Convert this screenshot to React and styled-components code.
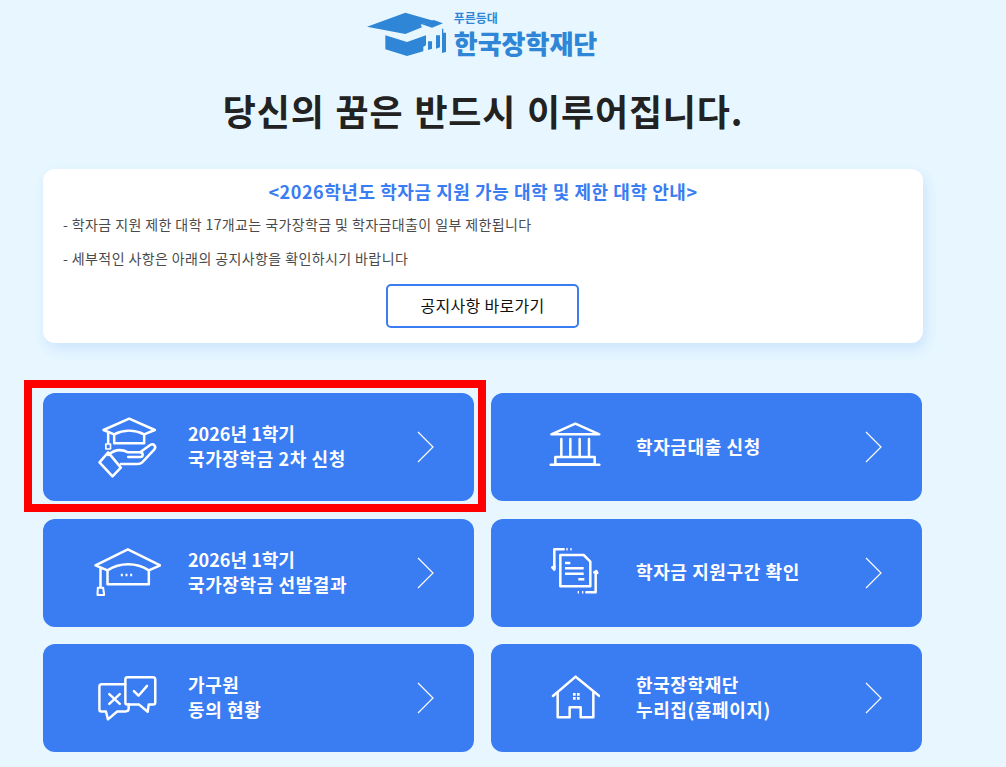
import React from 'react';
import styled, { createGlobalStyle } from 'styled-components';

const Global = createGlobalStyle`
  html, body { margin: 0; padding: 0; height: 100%; overflow: hidden; }
  body {
    background: #e8f7ff;
    font-family: "Noto Sans CJK KR", "Noto Sans", sans-serif;
  }
`;

const Page = styled.div`
  width: 966px;
  box-sizing: border-box;
  padding: 0 43px;
`;

const LogoRow = styled.div`
  display: flex;
  justify-content: center;
  align-items: flex-start;
  gap: 6px;
  height: 60px;
  padding: 11px 2px 0 0;
  box-sizing: border-box;
`;

const LogoText = styled.div`
  display: flex;
  flex-direction: column;
  color: #2f86d6;
  font-weight: 700;
`;

const LogoSmall = styled.span`
  font-size: 12px;
  line-height: 14px;
`;

const LogoBig = styled.span`
  font-size: 26px;
  line-height: 30px;
  margin-top: 3px;
  font-weight: 900;
`;

const Headline = styled.h1`
  margin: 0;
  height: 109px;
  padding-top: 24px;
  box-sizing: border-box;
  text-align: center;
  font-size: 36px;
  line-height: 52px;
  font-weight: 700;
  letter-spacing: 0.8px;
  word-spacing: 2px;
  color: #222;
`;

const Notice = styled.section`
  height: 174px;
  box-sizing: border-box;
  padding: 8px 20px 0;
  background: #fff;
  border-radius: 12px;
  box-shadow: 3px 6px 14px rgba(60, 130, 240, 0.16);
`;

const NoticeTitle = styled.div`
  text-align: center;
  font-size: 18px;
  line-height: 28px;
  font-weight: 700;
  letter-spacing: 0.55px;
  color: #3a7cf2;
`;

const NoticeLine = styled.p`
  margin: ${p => p.$top}px 0 0;
  font-size: 14px;
  line-height: 20px;
  letter-spacing: 0.4px;
  color: #4a4a4a;
`;

const NoticeLink = styled.a`
  display: block;
  width: 193px;
  height: 44px;
  box-sizing: border-box;
  margin: 16px 0 0 323px;
  border: 2px solid #3a7cf2;
  border-radius: 5px;
  text-align: center;
  font-size: 16px;
  line-height: 39px;
  letter-spacing: 0.3px;
  color: #111;
`;

const Grid = styled.div`
  display: grid;
  grid-template-columns: 431px 431px;
  grid-auto-rows: 108px;
  column-gap: 17px;
  row-gap: 17.5px;
  margin-top: 50px;
`;

const Tile = styled.a`
  position: relative;
  display: flex;
  align-items: center;
  padding: 0 40px 0 24px;
  background: #3a7cf2;
  border-radius: 12px;
  color: #fff;
`;

const IconSlot = styled.div`
  flex: 0 0 121px;
  display: flex;
  justify-content: center;
  padding-right: 1px;
  box-sizing: border-box;
`;

const TileText = styled.div`
  flex: 1;
  padding-bottom: 2px;
  font-size: 18px;
  line-height: 25px;
  font-weight: 700;
`;

const TileLine = styled.div`
  letter-spacing: ${p => (p.$numeric ? '0' : '0.6px')};
`;

const Highlight = styled.div`
  position: absolute;
  left: -19px;
  top: -13px;
  width: 462px;
  height: 132px;
  box-sizing: border-box;
  border: 8px solid #ff0000;
  pointer-events: none;
`;

const Line = styled.svg`
  display: block;
  fill: none;
  stroke: #fff;
  stroke-width: 7.5;
  stroke-linecap: round;
  stroke-linejoin: round;
`;

const Chevron = () => (
  <svg width="17" height="32" viewBox="0 0 17 32" fill="none" stroke="#fff" strokeWidth="1.2">
    <path d="M1 1l15 15L1 31" />
  </svg>
);

const CapLogo = () => (
  <svg width="81" height="48" viewBox="85 35 243 144" fill="#2f86d6">
    <path d="M85 82l115-42 84 24-38 12 4 8-50 20z" />
    <path d="M250 75l35-13 28 10-33 13z" />
    <path d="M140 108l65 20 57-20v30l-8 4v14l-49 14-65-20z" />
    <path d="M268 126h12v22l-12 4zM292 108h12v36l-12 4zM310 88h4v12h8v58l-12 3z" />
  </svg>
);

const CapHandIcon = () => (
  <Line width="67" height="65" viewBox="220 120 200 195">
    <path d="M248 165l77-34 77 34-32 13c-28-14-62-14-90 0z" />
    <path d="M280 178v27h90v-27" />
    <path d="M262 172v32" />
    <path d="M255 207h14v15h-14z" strokeWidth="5" />
    <path d="M236 262l26-30 38 46-25 26z" />
    <path d="M262 240c20-18 40-18 60-8h36c10 0 10 14 0 14h-36" />
    <path d="M358 232l30-22c10-6 20 4 12 14l-36 38c-4 4-8 5-14 5h-50" />
  </Line>
);

const CapIcon = () => (
  <Line width="67" height="50" viewBox="40 55 200 150">
    <path d="M44 107l97-48 97 48-34 15c-38-24-86-24-124 0z" />
    <path d="M80 122v42h124v-42" />
    <path d="M59 114v58" />
    <path d="M51 174h16l3 22H50z" strokeWidth="6" />
    <path d="M120 136h6M134 136h6M148 136h6" strokeLinecap="butt" />
  </Line>
);

const ChatIcon = () => (
  <Line width="60" height="46" viewBox="50 45 180 140">
    <path d="M135 73H63c-5 0-7 2-7 7v70c0 4 2 6 6 6h14l6 24 28-24h25c6 0 10-3 10-8v-14" />
    <path d="M141 52h78c5 0 7 2 7 7v70c0 4-2 6-6 6h-14l-3 22-26-22h-36c-4 0-6-2-6-6V59c0-5 2-7 6-7z" />
    <path d="M86 103l32 30M118 103l-32 30" />
    <path d="M161 94l14 14 26-30" />
  </Line>
);

const BankIcon = () => (
  <Line width="52" height="50" viewBox="55 45 156 150">
    <path d="M62 82l72-32 72 32z" />
    <path d="M92 96v50M119 96v50M147 96v50M175 96v50" />
    <path d="M74 150h118v22H74z" />
    <path d="M60 173h146" />
  </Line>
);

const DocIcon = () => (
  <Line width="48" height="49" viewBox="62 45 144 147">
    <path d="M90 66h70l20 20v74H90z" />
    <path d="M104 90h16M104 106h56M104 122h56M144 139h18" strokeLinecap="butt" />
    <path d="M100 49H72v56" />
    <path d="M66 103l6 7 0-10z" />
    <path d="M108 49h4M120 49h4" strokeLinecap="butt" />
    <path d="M168 178h28v-58" />
    <path d="M192 118l6-4 3 6z" />
    <path d="M142 178h4M155 178h4" strokeLinecap="butt" />
  </Line>
);

const HouseIcon = () => (
  <Line width="49" height="46" viewBox="60 33 147 138">
    <path d="M66 96l68-58 71 58" />
    <path d="M80 86v74h36v-30h33v30h38V86" />
    <path d="M126 87h8v8h-8zM138 87h8v8h-8zM126 99h8v8h-8zM138 99h8v8h-8z" fill="#fff" stroke="none" />
  </Line>
);

const tiles = [
  { icon: <CapHandIcon />, lines: ['2026년 1학기', '국가장학금 2차 신청'], marked: true },
  { icon: <BankIcon />, lines: ['학자금대출 신청'] },
  { icon: <CapIcon />, lines: ['2026년 1학기', '국가장학금 선발결과'] },
  { icon: <DocIcon />, lines: ['학자금 지원구간 확인'] },
  { icon: <ChatIcon />, lines: ['가구원', '동의 현황'] },
  { icon: <HouseIcon />, lines: ['한국장학재단', '누리집(홈페이지)'] },
];

export default function App() {
  return (
    <Page>
      <Global />
      <LogoRow>
        <CapLogo />
        <LogoText>
          <LogoSmall>푸른등대</LogoSmall>
          <LogoBig>한국장학재단</LogoBig>
        </LogoText>
      </LogoRow>
      <Headline>당신의 꿈은 반드시 이루어집니다.</Headline>
      <Notice>
        <NoticeTitle>&lt;2026학년도 학자금 지원 가능 대학 및 제한 대학 안내&gt;</NoticeTitle>
        <NoticeLine $top={9}>- 학자금 지원 제한 대학 17개교는 국가장학금 및 학자금대출이 일부 제한됩니다</NoticeLine>
        <NoticeLine $top={14}>- 세부적인 사항은 아래의 공지사항을 확인하시기 바랍니다</NoticeLine>
        <NoticeLink>공지사항 바로가기</NoticeLink>
      </Notice>
      <Grid>
        {tiles.map(t => (
          <Tile key={t.lines.join()}>
            <IconSlot>{t.icon}</IconSlot>
            <TileText>
              {t.lines.map(l => <TileLine key={l} $numeric={/^\d/.test(l)}>{l}</TileLine>)}
            </TileText>
            <Chevron />
            {t.marked && <Highlight />}
          </Tile>
        ))}
      </Grid>
    </Page>
  );
}
